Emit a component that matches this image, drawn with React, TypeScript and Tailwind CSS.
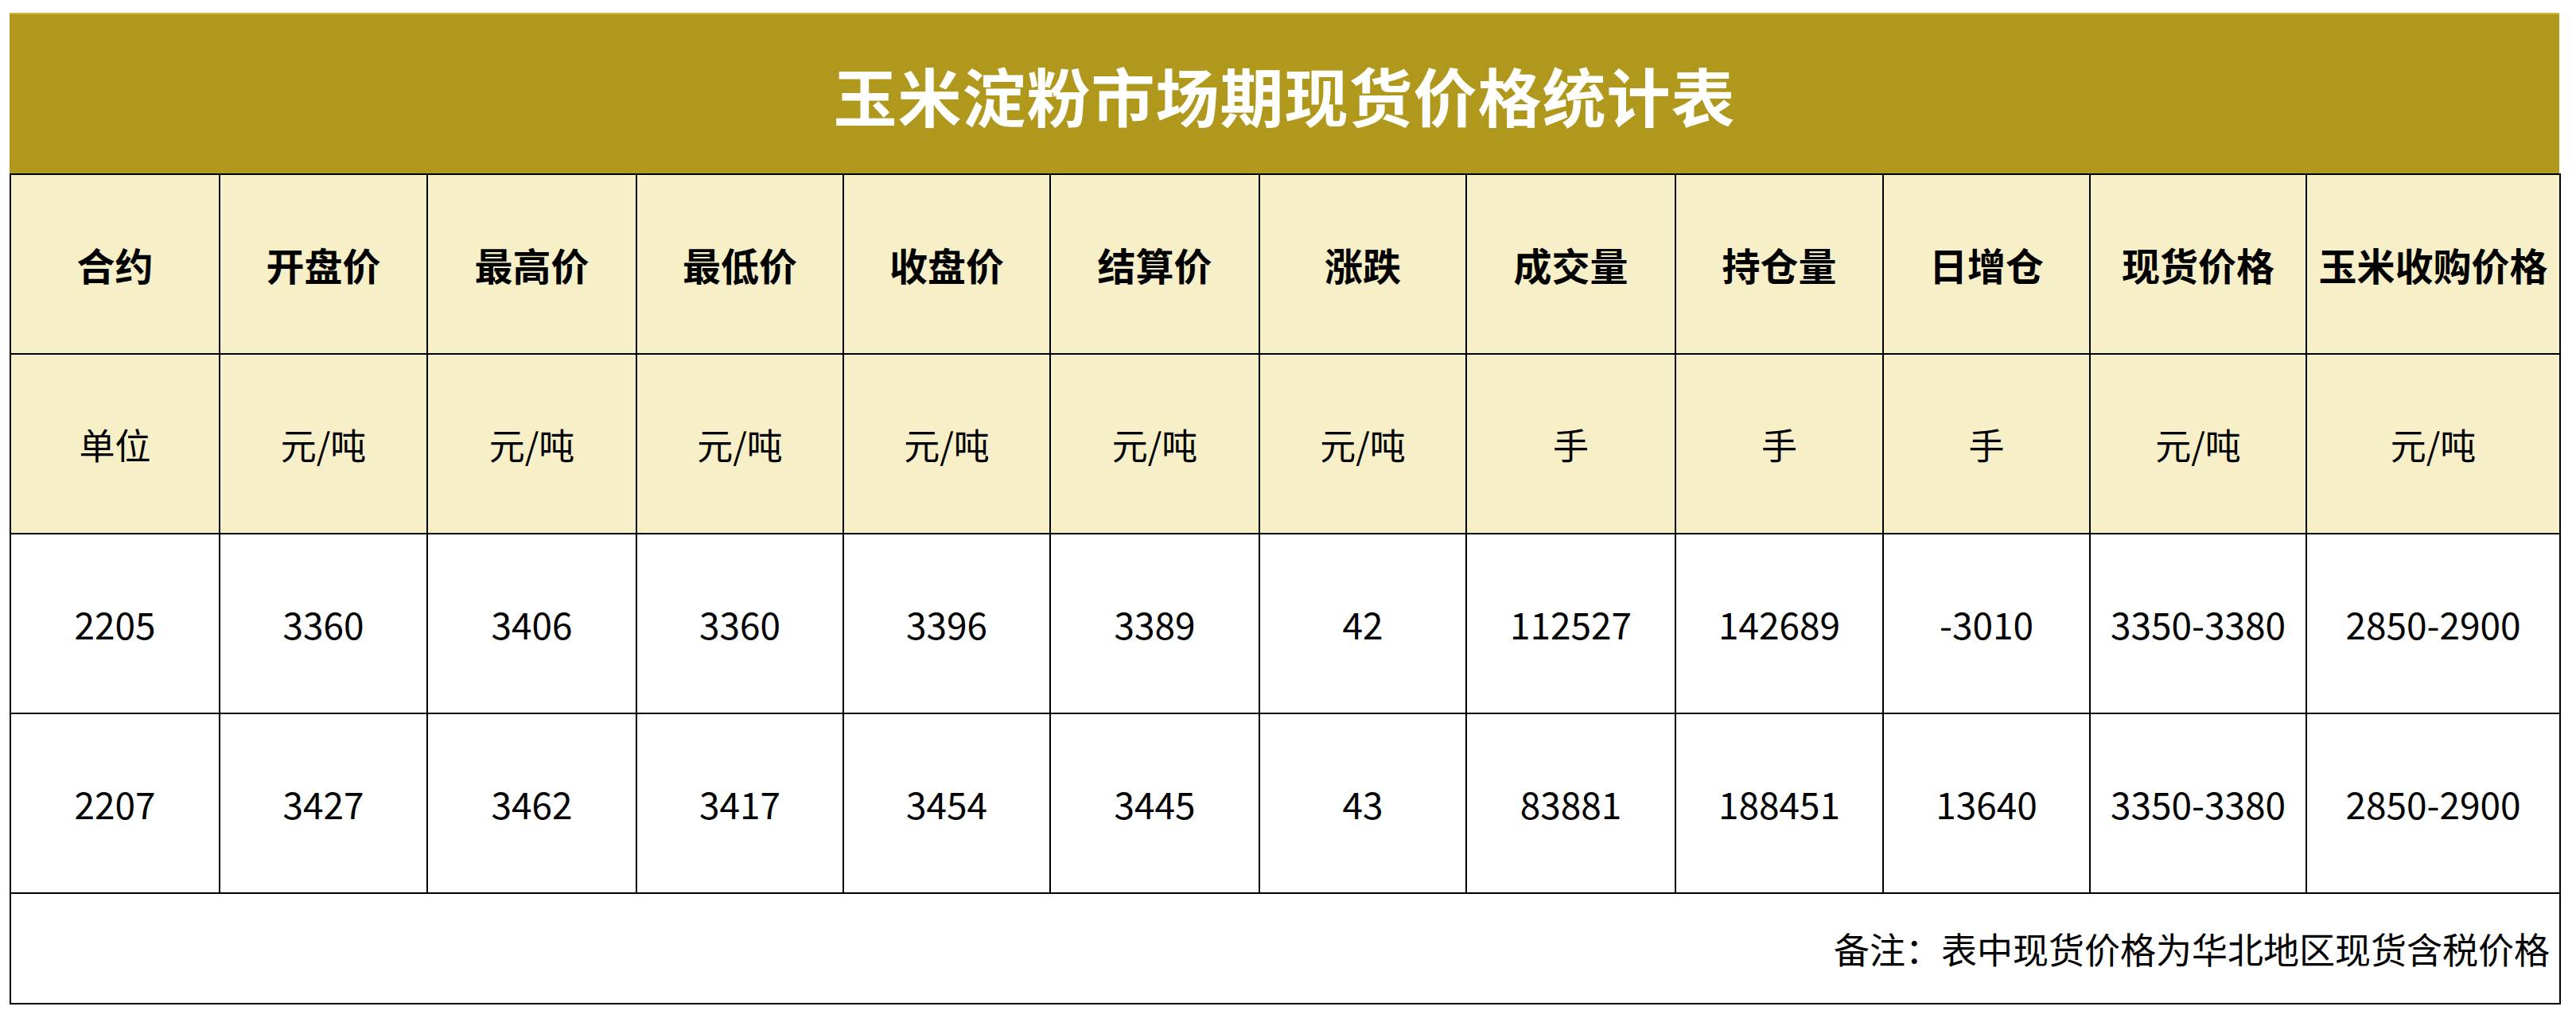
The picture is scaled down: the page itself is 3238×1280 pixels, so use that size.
const headers = ["合约", "开盘价", "最高价", "最低价", "收盘价", "结算价", "涨跌", "成交量", "持仓量", "日增仓", "现货价格", "玉米收购价格"]
const units = ["单位", "元/吨", "元/吨", "元/吨", "元/吨", "元/吨", "元/吨", "手", "手", "手", "元/吨", "元/吨"]
const rows = [
  ["2205", "3360", "3406", "3360", "3396", "3389", "42", "112527", "142689", "-3010", "3350-3380", "2850-2900"],
  ["2207", "3427", "3462", "3417", "3454", "3445", "43", "83881", "188451", "13640", "3350-3380", "2850-2900"],
]
const widths = [263, 261, 263, 260, 260, 263, 260, 263, 261, 260, 272, 319]

const font = { fontFamily: '"Noto Sans CJK SC", "Noto Sans", sans-serif' }

export default function App() {
  return (
    <div className="bg-white min-h-[1280px] pt-[16px] pl-[12px]" style={font}>
      <div className="w-[3205px]">
        {/* 标题 */}
        <div className="h-[202px] bg-[#b0981d] border-t-2 border-[#d2b43a] flex items-center justify-center">
          <span className="text-[80px] font-bold text-white leading-none tracking-[1px]">玉米淀粉市场期现货价格统计表</span>
        </div>

        <table className="table-fixed border-collapse w-[3205px] text-black">
          <colgroup>
            {widths.map((w, i) => (
              <col key={i} style={{ width: w }} />
            ))}
          </colgroup>
          <tbody>
            <tr className="bg-[#f7efc8]">
              {headers.map((h, i) => (
                <td key={i} className="h-[226px] border-[2.5px] border-black text-center align-middle text-[48px] font-bold leading-none whitespace-nowrap">
                  {h}
                </td>
              ))}
            </tr>
            <tr className="bg-[#f7efc8]">
              {units.map((u, i) => (
                <td key={i} className="h-[226px] border-[2.5px] border-black text-center align-middle text-[45px] leading-none">
                  {u}
                </td>
              ))}
            </tr>
            {rows.map((r, ri) => (
              <tr key={ri} className="bg-white">
                {r.map((v, i) => (
                  <td key={i} className="h-[226px] border-[2.5px] border-black text-center align-middle text-[46px] leading-none whitespace-nowrap">
                    {v}
                  </td>
                ))}
              </tr>
            ))}
            <tr className="bg-white">
              <td colSpan={12} className="h-[139px] border-[2.5px] border-black text-right align-middle text-[45px] leading-none pr-[12px]">
                备注：表中现货价格为华北地区现货含税价格
              </td>
            </tr>
          </tbody>
        </table>
      </div>
    </div>
  )
}
